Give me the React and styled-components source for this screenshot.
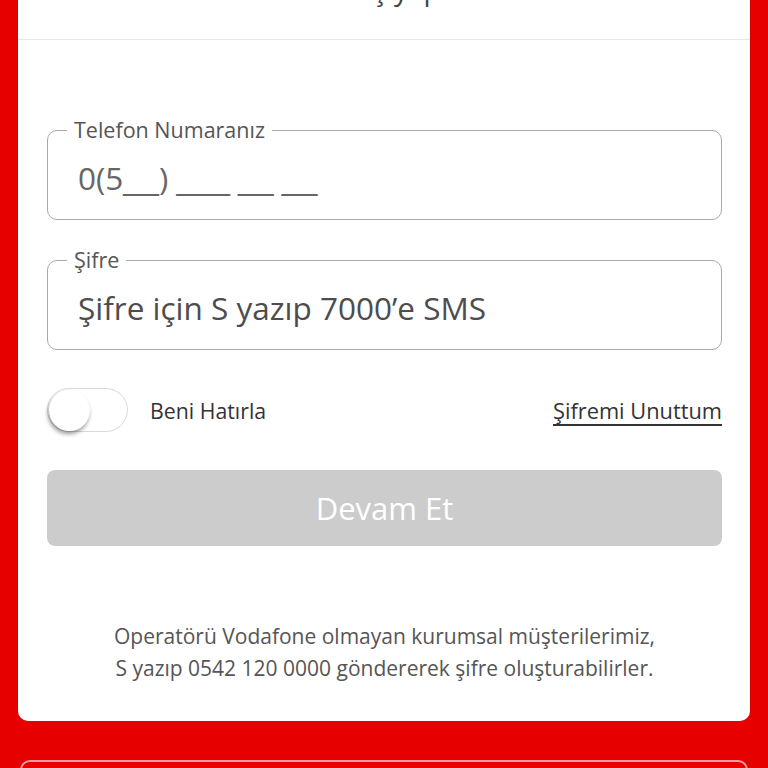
import React from "react";
import styled, { createGlobalStyle } from "styled-components";

const GlobalStyle = createGlobalStyle`
  html, body {
    margin: 0;
    padding: 0;
    background: #e60000;
    font-family: "Open Sans", Lato, sans-serif;
  }
  * {
    box-sizing: border-box;
  }
`;

const Page = styled.div`
  width: 768px;
  height: 768px;
  overflow: hidden;
  display: flex;
  flex-direction: column;
  padding: 0 18px;
`;

const Card = styled.div`
  background: #ffffff;
  border-radius: 0 0 10px 10px;
  display: flex;
  flex-direction: column;
`;

const Header = styled.div`
  height: 40px;
  border-bottom: 1px solid #e6e6e6;
  display: flex;
  justify-content: center;
  align-items: flex-start;
  overflow: hidden;
`;

const Title = styled.h1`
  margin: -25px 0 0;
  font-size: 28px;
  line-height: 28px;
  font-weight: 400;
  color: #444;
`;

const Body = styled.div`
  display: flex;
  flex-direction: column;
  padding: 77px 28px 37px 29px;
`;

const Field = styled.fieldset`
  margin: ${(p) => (p.$first ? "0" : "27px 0 0")};
  padding: 0 30px 7px;
  border: 1.5px solid #a8a8a8;
  border-radius: 10px;
  min-width: 0;
`;

const Legend = styled.legend`
  margin-left: -11px;
  padding: 0 7px;
  font-size: 21.5px;
  line-height: 26px;
  color: #555;
`;

const Value = styled.div`
  height: 69px;
  display: flex;
  align-items: center;
  font-size: 31.5px;
  color: ${(p) => (p.$placeholder ? "#4d4d4d" : "#666")};
  white-space: nowrap;
`;

const Blank = styled.span`
  font-family: "Liberation Sans", Arial, sans-serif;
  font-size: 32px;
`;

const Row = styled.div`
  margin-top: 38px;
  display: flex;
  align-items: center;
  justify-content: space-between;
`;

const RememberGroup = styled.label`
  display: flex;
  align-items: center;
  gap: 22px;
`;

const Track = styled.span`
  width: 81px;
  height: 44px;
  border-radius: 22px;
  border: 1px solid #d9d9d9;
  background: #fff;
  display: flex;
  align-items: center;
  padding: 0 1px;
`;

const Knob = styled.span`
  width: 41px;
  height: 41px;
  border-radius: 50%;
  background: #fff;
  box-shadow: -1px 3px 4px rgba(0, 0, 0, 0.4);
`;

const RowText = styled.span`
  font-size: 21.3px;
  color: #333;
`;

const ForgotLink = styled.a`
  font-size: 21.8px;
  color: #333;
  text-decoration: underline;
  text-decoration-thickness: 2px;
  text-decoration-skip-ink: none;
  text-underline-offset: 5px;
`;

const Button = styled.button`
  margin-top: 38px;
  height: 76px;
  border: none;
  border-radius: 8px;
  background: #cccccc;
  color: #ffffff;
  font-family: inherit;
  font-size: 31px;
`;

const Note = styled.p`
  margin: 74px 0 0;
  text-align: center;
  font-size: 21px;
  line-height: 32px;
  color: #555;
`;

const Outline = styled.div`
  margin: 39px 2px 0;
  height: 60px;
  flex-shrink: 0;
  border: 2px solid rgba(255, 255, 255, 0.6);
  border-radius: 10px;
`;

export default function App() {
  return (
    <>
      <GlobalStyle />
      <Page>
        <Card>
          <Header>
            <Title>Giriş yap</Title>
          </Header>
          <Body>
            <Field $first>
              <Legend>Telefon Numaranız</Legend>
              <Value>
                <span>
                  0(5<Blank>__</Blank>) <Blank>___</Blank> <Blank>__</Blank>{" "}
                  <Blank>__</Blank>
                </span>
              </Value>
            </Field>
            <Field>
              <Legend>Şifre</Legend>
              <Value $placeholder>Şifre için S yazıp 7000’e SMS</Value>
            </Field>
            <Row>
              <RememberGroup>
                <Track>
                  <Knob />
                </Track>
                <RowText>Beni Hatırla</RowText>
              </RememberGroup>
              <ForgotLink>Şifremi Unuttum</ForgotLink>
            </Row>
            <Button>Devam Et</Button>
            <Note>
              Operatörü Vodafone olmayan kurumsal müşterilerimiz,
              <br />
              S yazıp 0542 120 0000 göndererek şifre oluşturabilirler.
            </Note>
          </Body>
        </Card>
        <Outline />
      </Page>
    </>
  );
}
